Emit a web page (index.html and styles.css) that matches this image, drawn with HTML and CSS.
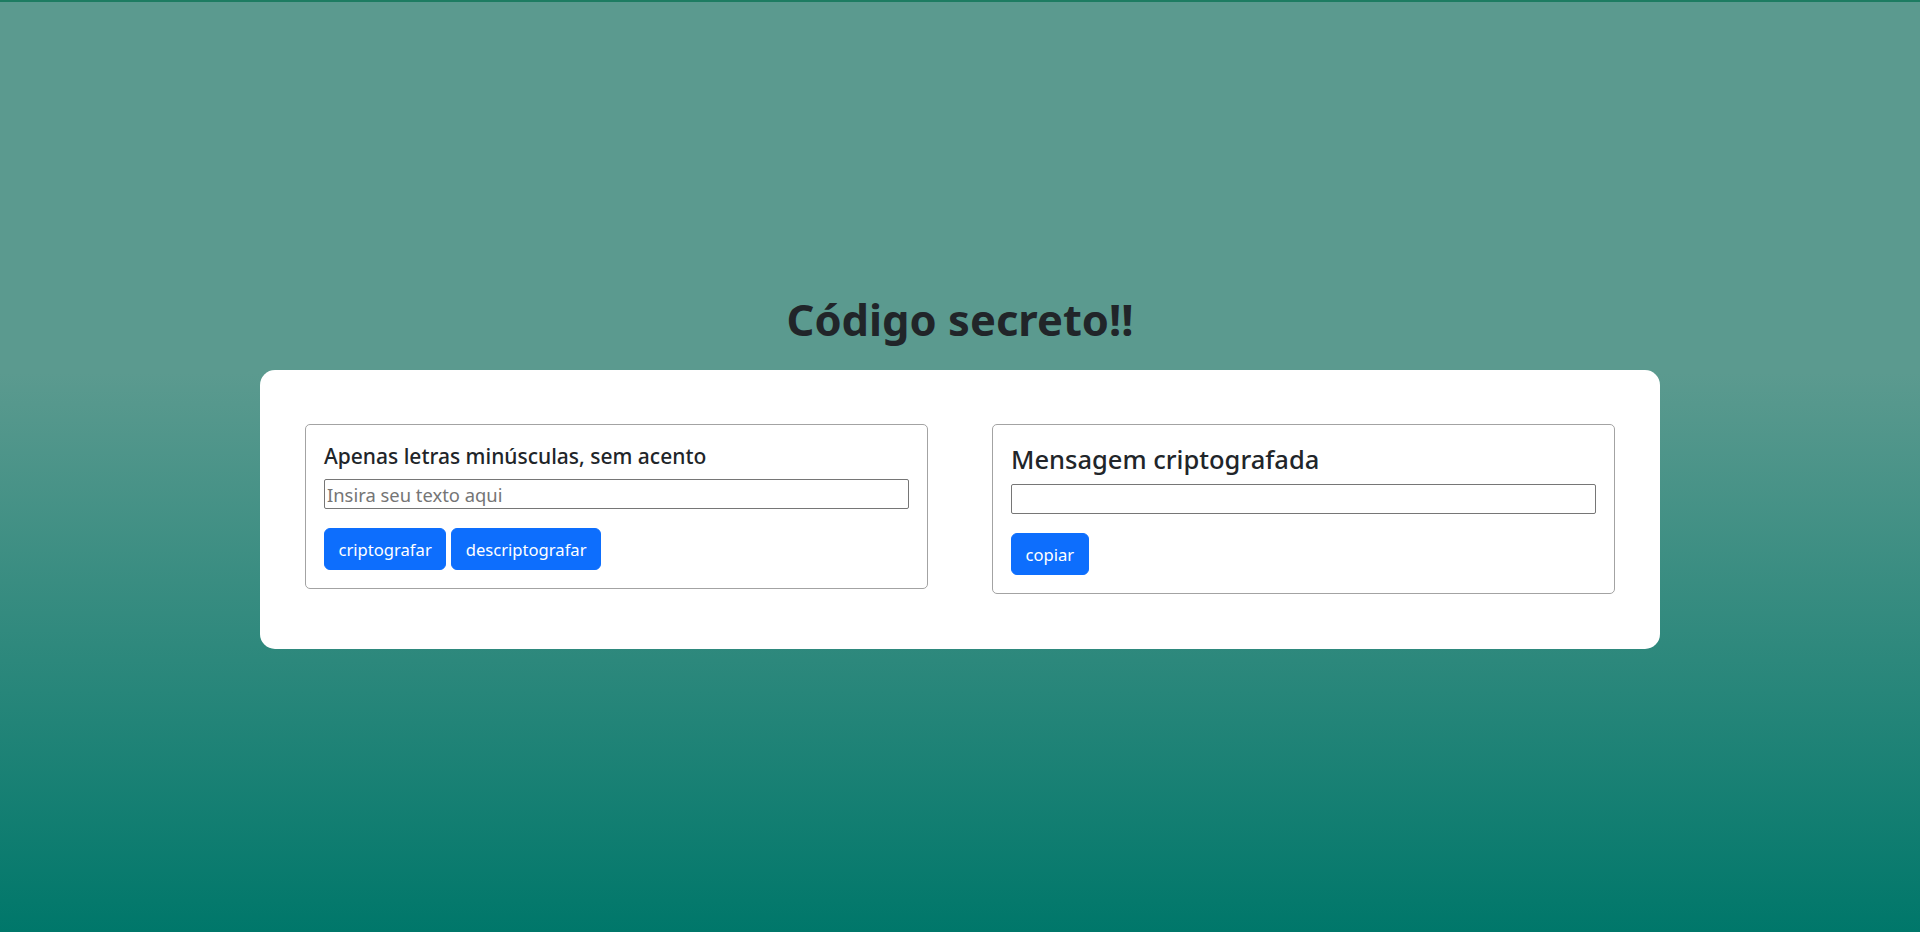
FILE: index.html
```html
<!DOCTYPE html>
<html lang="pt-BR">
<head>
<meta charset="utf-8">
<title>Código secreto!!</title>
<link rel="stylesheet" href="styles.css">
</head>
<body>
<main class="page">
  <h1 class="title">Código secreto!!</h1>
  <section class="card">
    <div class="panel">
      <h5 class="panel-title small">Apenas letras minúsculas, sem acento</h5>
      <input class="field" type="text" placeholder="Insira seu texto aqui">
      <div class="actions">
        <button class="btn" type="button">criptografar</button>
        <button class="btn" type="button">descriptografar</button>
      </div>
    </div>
    <div class="panel">
      <h4 class="panel-title large">Mensagem criptografada</h4>
      <input class="field" type="text">
      <div class="actions">
        <button class="btn" type="button">copiar</button>
      </div>
    </div>
  </section>
</main>
</body>
</html>
```

FILE: styles.css
```css
* { box-sizing: border-box; }

html, body { height: 100%; }

body {
  margin: 0;
  border-top: 2px solid #1d7c62;
  min-height: 100vh;
  background: linear-gradient(to bottom, #5b9a8f 0%, #5b9a8f 40%, #00776a 100%);
  font-family: "Noto Sans", "Open Sans", sans-serif;
  color: #212529;
}

.page {
  display: flex;
  flex-direction: column;
  align-items: center;
  padding-top: 290px;
}

.title {
  margin: 0 0 24px;
  font-size: 43.5px;
  line-height: 54px;
  font-weight: 700;
  color: #212529;
}

.card {
  width: 1400px;
  background: #fff;
  border-radius: 15px;
  padding: 54px 45px 55px;
  display: grid;
  grid-template-columns: 1fr 1fr;
  column-gap: 64px;
  align-items: start;
}

.panel {
  border: 1px solid #a3a3a3;
  border-radius: 5px;
  padding: 18px;
}

.panel-title {
  margin: 0 0 9px;
  font-weight: 500;
  color: #212529;
}

.panel-title.small {
  font-size: 21px;
  line-height: 27px;
}

.panel-title.large {
  font-size: 25.5px;
  line-height: 32px;
}

.field {
  display: block;
  width: 100%;
  height: 30px;
  border: 1px solid #767676;
  border-radius: 2px;
  padding: 1px 2px;
  font-family: inherit;
  font-size: 18.4px;
  color: #212529;
  background: #fff;
}

.field::placeholder {
  color: #757575;
}

.actions {
  display: flex;
  gap: 5px;
  margin-top: 19px;
}

.btn {
  height: 42px;
  padding: 0 13.5px;
  border: 1px solid #0d6efd;
  border-radius: 6px;
  background: #0d6efd;
  color: #fff;
  font-family: inherit;
  font-size: 16.6px;
  line-height: 27px;
  cursor: pointer;
}
```
